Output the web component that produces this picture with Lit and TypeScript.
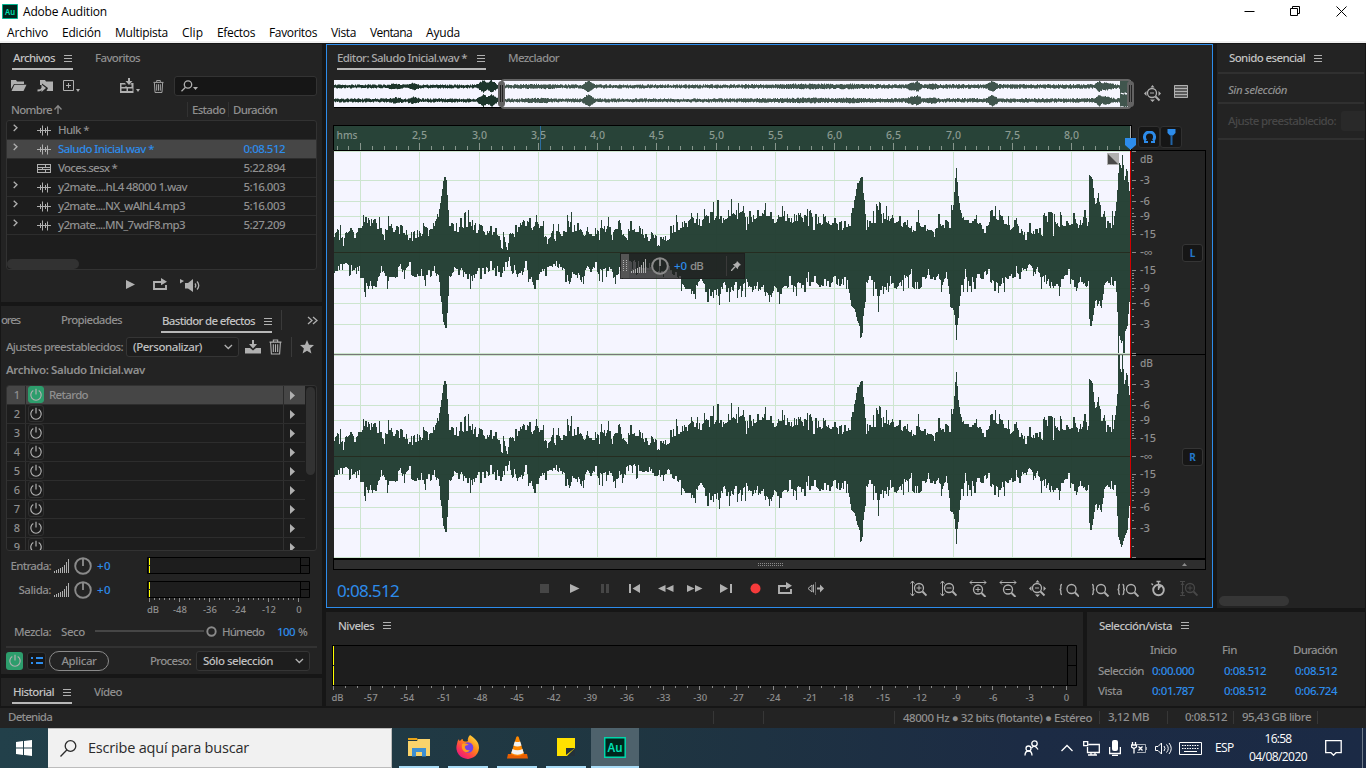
import { LitElement, html, svg, css } from "lit";
import { customElement, property } from "lit/decorators.js";

/** Text run that spreads its letters to occupy a given width. */
@customElement("fit-text")
class FitText extends LitElement {
  @property({ type: Number }) w = 0;
  static styles = css`
    :host { display: inline-block; white-space: nowrap; }
    .run { display: inline-block; white-space: nowrap; }
  `;
  render() { return html`<span class="run"><slot></slot></span>`; }
  firstUpdated() {
    if (!this.w) return;
    const run = this.renderRoot.querySelector(".run") as HTMLElement;
    const n = (this.textContent || "").trim().length;
    const natural = run.getBoundingClientRect().width;
    run.style.letterSpacing = `${(this.w - natural) / Math.max(1, n)}px`;
    this.style.width = `${this.w}px`;
  }
}

const T = (s: string, w: number, cls = "") => html`<fit-text class=${cls} .w=${w}>${s}</fit-text>`;
const icon = (x: number, y: number, w: number, h: number, body: unknown, cls = "") =>
  html`<svg class="ic ${cls}" width=${w} height=${h} viewBox="${x} ${y} ${w} ${h}">${body}</svg>`;

/* ---------- waveform data: [zoomed x, amplitude] pairs at a third of a pixel ---------- */
const UP_A = "24 15 35 23 52 6 75 24 95 20 105 24 113 37 125 29 147 33 165 24 175 12 183 22 187 36 192 26 200 24 230 26 245 17 260 11 275 22 292 29 308 16 325 26 334 38 338 35 344 49 349 62 354 75 361 75 364 59 368 40 372 26 385 21 400 25 405 34 412 24 425 25 428 42 432 30 440 32 453 19 463 27 480 17 495 26 510 24 520 16 527 4 535 15 545 2 553 19 570 27 583 29 600 26 612 34 620 22 628 30 632 37 637 28 650 26 665 8 680 21 700 20 710 16 720 20 724 37 730 25 736 40 741 20 758 29 775 16 785 25 808 24 820 12 826 32 845 26 860 12 883 29 905 12 915 31 925 23 940 26 955 14 980 19 1001 6 1015 12 1035 26 1047 20 1052 37 1057 22 1065 24 1075 31 1085 25 1097 39 1107 29 1115 39 1125 26 1138 36 1150 29 1158 40 1162 50 1166 32 1172 36 1176 52 1180 33 1190 29 1207 42 1212 36 1216 53 1222 39 1232 42 1252 46 1262 22 1272 41 1285 33 1295 42 1310 39 1318 49 1335 40 1345 36";
const UP_B = "0 31 12 29 25 37 37 46 48 31 65 34 80 37 92 39 105 37 115 26 125 39 132 22 138 38 150 29 160 38 175 31 195 34 205 22 225 31 240 26 247 44 255 52 258 60 262 69 267 69 272 75 278 75 280 60 283 52 290 22 300 31 315 29 322 46 326 42 330 54 337 29 345 33 349 46 353 32 358 31 368 37 375 29 390 36 400 29 412 32 425 26 435 21 441 30 445 42 452 26 465 27 480 22 493 15 502 24 507 38 515 26 528 32 540 24 545 47 551 47 554 62 557 76 559 86 562 72 567 49 570 42 575 39 585 32 600 29 620 37 630 29 645 19 655 27 672 36 688 42 700 32 715 36 722 22 740 34 750 19 768 12 780 29 790 21 810 24 817 16 828 36 843 40 850 16 862 29 874 37 885 26 900 27 912 39 925 24 945 42 952 26 956 30 958 77 963 76 967 74 972 60 975 48 981 49 985 61 988 50 992 47 1003 41 1010 24 1025 24 1035 36 1041 54 1045 75 1047 89 1051 88 1054 81 1057 99 1060 90 1064 69 1068 80 1071 86 1075 72 1078 61";
const DN_A = "24 21 40 18 60 11 70 24 100 14 108 26 115 40 130 34 150 35 160 24 167 14 180 24 185 37 190 25 205 25 220 14 235 27 252 10 270 25 292 24 298 34 303 23 325 14 340 30 345 44 349 60 352 70 357 74 361 79 364 64 367 44 370 24 385 15 412 25 430 22 433 37 437 24 450 22 465 27 495 9 510 24 525 25 540 10 550 5 557 19 575 25 590 23 600 9 607 30 620 30 627 37 633 28 645 20 660 24 675 14 692 9 705 15 720 30 730 32 740 20 767 30 785 14 800 17 810 10 830 30 855 17 865 25 880 15 890 27 905 10 920 17 938 9 960 15 985 20 1000 14 1012 25 1030 14 1050 20 1062 24 1070 32 1080 37 1104 42 1108 47 1112 33 1125 27 1140 40 1155 44 1172 43 1177 42 1180 55 1184 40 1195 30 1207 36 1210 50 1214 40 1230 30 1244 34 1247 45 1262 27 1280 40 1295 30 1315 40 1330 50 1336 45 1345 25";
const DN_B = "0 45 10 27 24 40 28 52 33 42 45 34 60 24 70 40 85 30 105 40 115 20 120 34 135 24 150 35 165 27 180 35 195 24 210 34 225 25 237 37 244 54 255 57 262 69 268 72 271 86 277 85 279 68 283 57 286 50 290 30 300 24 318 37 323 44 325 63 328 44 345 35 355 40 362 24 380 37 395 34 410 24 425 17 440 37 460 25 475 17 490 25 515 40 530 20 537 34 541 55 550 57 555 66 558 80 560 90 563 70 567 63 570 44 580 40 586 17 600 34 615 37 622 22 640 27 657 17 675 39 690 34 720 24 735 25 740 14 750 27 765 17 782 13 790 24 803 15 815 37 835 27 855 34 868 44 875 27 897 17 900 32 920 39 935 30 955 22 959 74 965 74 970 64 978 45 983 55 990 47 993 60 1000 42 1010 30 1025 25 1040 40 1045 80 1055 92 1065 80 1073 74 1078 50";

const nums = (s: string) => s.split(" ").map(Number);
function points(a: string, b: string): [number, number][] {
  const out: [number, number][] = [];
  const A = nums(a), B = nums(b);
  for (let i = 0; i < A.length; i += 2) out.push([326 + A[i] / 3, A[i + 1]]);
  for (let i = 0; i < B.length; i += 2) out.push([770 + B[i] / 3, B[i + 1]]);
  return out;
}
function rng(seed: number) {
  let s = seed;
  return () => { s = (s * 1664525 + 1013904223) % 4294967296; return s / 4294967296; };
}
/** Peaks and dips are one pixel wide; between them the level is a noisy local mean. */
function envelope(p: [number, number][], seed: number): number[] {
  const r = rng(seed);
  const out: number[] = [];
  let k = 0;
  let held = 0;
  for (let x = 334; x < 1131; x++) {
    const c = x + 0.5;
    while (k < p.length - 2 && p[k + 1][0] < c) k++;
    const [x0, y0] = p[k], [x1, y1] = p[k + 1];
    const f = Math.min(1, Math.max(0, (c - x0) / (x1 - x0)));
    let v = y0 + (y1 - y0) * f;
    const j = r();
    if (Math.max(y0, y1) < 54) {
      const near = c - x0 < 0.8 ? y0 : x1 - c < 0.8 ? y1 : -1;
      if (near >= 0) v = near;
      else {
        const around = p.slice(Math.max(0, k - 1), k + 3).map(q => Math.min(46, q[1]));
        const mean = around.reduce((a, b) => a + b, 0) / around.length;
        const base = mean * 0.7 + v * 0.3;
        if (r() > 0.35) held = (j - 0.58) * 11 + (j > 0.93 ? 6 : 0);
        v = base + held;
      }
    }
    out.push(Math.max(2, Math.min(101, Math.round(v))));
  }
  return out;
}
function wave(cy: number, seed: number, full: boolean): string {
  const u = envelope(points(UP_A, UP_B), seed);
  const d = envelope(points(DN_A, DN_B), seed + 9);
  for (let i = 784; i < 797; i++) {
    if (full) { if (i === 784 || i === 789 || i === 790) d[i] = 101; }
    else if (i === 784 || i === 785 || i === 788) u[i] = 101;
  }
  let s = `M334 ${cy}`;
  u.forEach((v, i) => (s += `V${cy - v}H${335 + i}`));
  for (let i = d.length - 1; i >= 0; i--) s += `V${cy + d[i]}H${334 + i}`;
  return s + "Z";
}
function miniWave(cy: number): string {
  const peaks: [number, number, number][] = [[395, 5, 1.3], [413, 4, 2], [483, 4, 4.5], [491, 4, 4.5], [588, 4, 4.5], [531, 8, 0.8], [545, 6, 0.8], [810, 30, 0.9], [850, 20, 0.8], [913, 6, 2.5], [917, 3, 3.5], [932, 5, 1.5], [992, 4, 4], [1099, 3, 4], [1105, 6, 2.500]];
  const r = rng(Math.round(cy * 7));
  const up: number[] = [], dn: number[] = [];
  for (let x = 334; x < 1131; x++) {
    let b = x > 740 ? 1.7 : 1.3;
    for (const [c, w, a] of peaks) b = Math.max(b, a * Math.max(0, 1 - Math.abs(x - c) / (w * 1.7)) + 1.5);
    if (x > 1119) b = 6.3;
    up.push(b + (r() - 0.4) * 1.3); dn.push(b + (r() - 0.5) * 1.3);
  }
  let s = `M334 ${cy}`;
  up.forEach((v, i) => (s += `V${(cy - v).toFixed(1)}H${335 + i}`));
  for (let i = dn.length - 1; i >= 0; i--) s += `V${(cy + dn[i]).toFixed(1)}H${334 + i}`;
  return s + "Z";
}

const rects = (list: number[][]) => list.map(([x, y, w, h]) => svg`<rect x=${x} y=${y} width=${w} height=${h}/>`);
const range = (n: number) => Array.from({ length: n }, (_, i) => i);

/* ---------- icons ---------- */
const burger = (cls = "") => icon(0, 0, 8, 7, rects([[0, 0, 8, 1], [0, 3, 8, 1], [0, 6, 8, 1]]), "light " + cls);
const trash = (w: number, h: number) => html`<svg class="ic light" width=${w} height=${h} viewBox="0 0 12 14"><path class="ln" d="M.5 2.500h11M4 2V.5h4V2M1.500 3l.7 10.500h7.600L10.500 3M4 4.500v7M6 4.500v7M8 4.500v7"/></svg>`;
const power = () => icon(0, 0, 14, 14, svg`<path class="lnp" d="M4.300 2.600a5.200 5.200 0 1 0 5.400 0M7 .8v5.700"/>`, "light");
const chevron = () => icon(0, 0, 9, 6, svg`<path class="ln15" d="M.7 1l3.600 3.500L8 1"/>`, "light");
const bars = () => icon(0, 0, 15, 14, rects([[0, 12, 1, 2], [2, 11, 1, 3], [4, 10, 1, 4], [6, 9, 1, 5], [8, 8, 1, 6], [10, 6, 1, 8], [12, 3, 1, 11], [14, 0, 1, 14]]), "light");
const knob = () => icon(0, 0, 18, 18, svg`<circle class="ln2" cx="9" cy="9" r="7.800"/><path class="ln2" d="M9 2v7"/>`, "mid");
const waveIcon = () => icon(0, 0, 14, 11, svg`<path class="ln" d="M0 5.500h14M3.500 3v5M5.500 .5v10M8.500 3v5M10.500 1.500v9"/>`, "light");
const sesxIcon = () => icon(0, 0, 14, 11, svg`<path d="M0 1h14v9H0z"/><path class="cut" d="M1 2h7v2H1zM9 2h4v2H9zM1 5h4v1H1zM6 5h7v1H6zM1 7h7v2H1zM9 7h4v2H9z"/>`, "light");
const lens = (x: number, y: number, inner = "") => svg`<circle class="ln15" cx=${x} cy=${y} r="4.500"/><path class="ln2" d="M${x + 3.5} ${y + 3.5}l4 4"/><path class="ln" d=${inner}/>`;
const loop = () => icon(0, 0, 15, 13, svg`<path class="ln2" d="M5 4H1v7h12V7"/><path d="M3 3h5V0l6 3.800-6 3.500V5H3z"/>`, "light");
const dropPin = svg`<path d="M6 0l4 4-1.500.5L7 6.500l-.2 1.700L1.800 3.200 3.500 3l2-1.500z"/><path class="ln15" d="M0 10l4-4.200"/>`;
const zoomFull = () => icon(0, 0, 17, 17, svg`${lens(8, 8, "M6 8h4")}<path d="M8.500 0l2 2.500h-4zM6 14.500h5L8.500 17zM0 8.500L2.500 6v5zM17 8.500L14.500 6v5z"/>`, "light");

@customElement("app-root")
class AppRoot extends LitElement {
  static styles = css`
    :host { display: block; width: 1366px; height: 768px; overflow: hidden; background: #161616; color: #8f8f8f; font: 500 11.5px/16px "Noto Sans", "Open Sans", sans-serif; }
    * { box-sizing: border-box; }
    svg { display: block; overflow: hidden; }
    .ic { flex: none; fill: currentColor; }
    .light { color: #b0b0b0; } .mid { color: #8a8a8a; }
    .ln, .ln15, .ln2, .lnp { fill: none; stroke: currentColor; stroke-width: 1; }
    .ln15 { stroke-width: 1.3; } .ln2 { stroke-width: 1.9; } .lnp { stroke-width: 1.200; }
    .cut { fill: #232323; }
    .blue { color: #2d8ceb; } .dim { color: #474747; }
    .grow { flex: 1; }

    .title { height: 23px; background: #fff; color: #000; display: grid; grid-template-columns: 17px 1fr 103px; padding: 0 19px 0 2px; align-items: center; font: 12px/22px "Open Sans", "Noto Sans", sans-serif; }
    .title .nm { margin-left: 4px; }
    .title .win { display: grid; grid-template-columns: 11px 11px 11px; column-gap: 35px; height: 20px; align-items: center; }
    .menu { height: 20px; background: #fff; border-bottom: 2px solid #f0f0f0; color: #000; display: flex; gap: 14px; padding-left: 7px; font: 12px/20px "Open Sans", "Noto Sans", sans-serif; }
    .app { height: 663px; display: flex; gap: 4px; padding: 1px 1px 0 1px; }
    .left { width: 321px; display: flex; flex-direction: column; gap: 4px; }
    .right { width: 1039px; display: flex; flex-direction: column; gap: 4px; }
    .panel { background: #232323; }
    .tabs { display: flex; height: 26px; padding-left: 11px; gap: 22px; line-height: 28px; }
    .tab { display: flex; gap: 9px; align-items: center; height: 26px; padding-top: 2px; }
    .tab.on { border-bottom: 2px solid #b8b8b8; padding: 4px 1px 0 1px; color: #c2c2c2; }

    .files { height: 258px; }
    .ftools { display: grid; grid-template-columns: 26px 26px 57px 33px 21px 143px; padding-left: 10px; height: 32px; align-items: center; }
    .search { height: 20px; border: 1px solid #333; border-radius: 3px; background: #161616; display: flex; align-items: center; padding-left: 6px; }
    .fhead { margin: 0 5px; height: 18px; display: grid; grid-template-columns: 181px 41px 1fr; line-height: 15px; }
    .fhead > div { display: flex; height: 15px; padding-left: 5px; }
    .fhead .b { border-left: 1px solid #323232; padding-left: 4px; }
    .list { margin: 0 5px; border: 1px solid #323232; border-radius: 3px; background: #1d1d1d; }
    .flist { height: 150px; display: flex; flex-direction: column; }
    .frow { height: 19px; display: grid; grid-template-columns: 30px 21px 170px 57px; align-items: center; border-bottom: 1px solid #2d2d2d; line-height: 18px; }
    .frow.sel { background: #464646; color: #2d8ceb; }
    .frow .arr { margin-left: 6px; margin-top: -4px; }
    .frow .dur { justify-self: end; }
    .hthumb { width: 72px; height: 10px; border-radius: 5px; background: #323232; margin-top: auto; }
    .ftrans { display: grid; grid-template-columns: 28px 27px 22px; padding-left: 124px; height: 29px; align-items: center; }

    .fx { height: 368px; overflow: hidden; }
    .fxtabs { display: grid; grid-template-columns: 60px 100px 111px 9px 1px 25px 11px; height: 26px; align-items: center; line-height: 28px; }
    .fxtabs .tab.on { grid-column: 3; }
    .vdiv { width: 1px; height: 20px; background: #3a3a3a; }
    .fxtabs .vdiv { grid-column: 5; } .fxtabs .more { grid-column: 7; }
    .preset { display: grid; grid-template-columns: 120px 113px 6px 24px 22px 9px 14px; height: 30px; align-items: center; padding-left: 5px; }
    .sel-box { display: flex; align-items: center; justify-content: space-between; height: 20px; border: 1px solid #353535; border-radius: 3px; padding: 0 5px 0 6px; background: #1d1d1d; color: #c0c0c0; line-height: 18px; }
    .fname { height: 23px; padding: 1px 0 0 5px; font-weight: 600; line-height: 14px; }
    .rack { height: 166px; display: flex; overflow: hidden; }
    .slots { width: 298px; }
    .slot { height: 19px; display: grid; grid-template-columns: 19px 22px 236px 21px; align-items: stretch; line-height: 18px; border-bottom: 1px solid #2d2d2d; }
    .slot .no { border-right: 1px solid #303030; text-align: right; padding-right: 5px; font-size: 11px; }
    .slot .pw { margin: 0 4px 1px 2px; border: 1px solid #303030; border-radius: 3px; display: grid; place-items: center; overflow: hidden; }
    .slot .nm { padding-left: 1px; border-right: 1px solid #303030; }
    .slot .go { display: grid; place-items: center start; padding-left: 6px; }
    .slot.on { background: #464646; } .slot.on .pw { background: #2d9d6c; border-color: #2d9d6c; } .slot.on .no, .slot.on .nm { border-color: #2a2a2a; }
    .vthumb { width: 10px; height: 88px; margin: 1px; border-radius: 5px; background: #323232; }
    .io { display: grid; grid-template-columns: 142px 164px; padding: 3px 0 0 4px; height: 64px; }
    .ctl { display: grid; grid-template-columns: 49px 20px 23px 20px; height: 24px; align-items: center; }
    .ctl fit-text:first-child { justify-self: end; margin-right: 3px; }
    .mix { height: 31px; display: grid; grid-template-columns: 47px 34px 127px 55px 21px 20px; padding: 3px 0 0 13px; align-items: center; }
    .hr { height: 2px; background: #323232; margin: 0 5px; }
    .foot { display: grid; grid-template-columns: 21px 22px 60px 41px 46px 114px; padding-left: 5px; height: 26px; align-items: center; }
    .btn { height: 18px; border-radius: 3px; display: grid; place-items: center; }
    .btn.green { width: 17px; background: #2d9d6c; } .btn.dark { width: 19px; background: #161616; border: 1px solid #303030; }
    .pill { height: 20px; border: 1.500px solid #8a8a8a; border-radius: 10px; display: grid; place-items: center; }
    .foot .pr { grid-column: 5; } .hist { height: 28px; }

    .top { display: flex; gap: 4px; height: 564px; }
    .editor { width: 887px; border: 1px solid #2d8ceb; height: 564px; }
    .editor .tabs { padding-left: 10px; height: 25px; }
    .editor .tab { height: 25px; padding-top: 1px; } .editor .tab.on { padding: 3px 1px 0 0; gap: 10px; color: #a8a8a8; }
    .ov { height: 55px; display: grid; grid-template-columns: 802px 15px 15px; padding: 9px 0 0 7px; }
    .ov .ic { margin-top: 6px; margin-left: 8px; } .ov .l { margin-left: 23px; }
    .ruler { display: flex; height: 25px; padding-left: 6px; }
    .ruler .grp { display: flex; margin: 1px 0 0 1px; }
    .rb { width: 22px; height: 22px; border: 1px solid #303030; border-radius: 3px; background: #161616; display: grid; place-items: center; }
    .stage { display: flex; padding-left: 7px; height: 408px; position: relative; }
    .hud { position: absolute; left: 293px; top: 103px; width: 125px; height: 26px; background: rgba(33, 33, 33, .8); display: grid; grid-template-columns: 10px 20px 23px 16px 36px 5px 12px; align-items: center; border: 1px solid rgba(25,25,25,.5); }
    .hud .grip { align-self: stretch; width: 8px; background: #555; display: grid; place-items: center; }
    .chan { position: absolute; left: 855px; width: 21px; height: 18px; border: 1px solid #353535; border-radius: 3px; background: #161616; color: #2477c9; font-weight: 700; font-size: 10px; line-height: 17px; text-align: center; }
    .chan.l { top: 94px; } .chan.r { top: 298px; }
    .hs { margin: 0 6px; height: 12px; border: 1px solid #000; border-top: 0; }
    .trans { display: grid; grid-template-columns: 203px 29px 32px 28px 29px 29px 33px 30px 28px 29px 103px 30px 29px 30px 30px 30px 33px 25px 34px 29px 18px; padding-left: 10px; height: 36px; align-items: center; }
    .time { font-size: 17px; line-height: 30px; padding-top: 5px; font-weight: 400; }

    .ess { width: 148px; overflow: hidden; }
    .ess .tabs { height: 28px; padding-left: 12px; } .ess .tab { color: #c2c2c2; }
    .ess .hr { margin: 0 1px; background: #303030; }
    .ess .t1 { height: 28px; padding: 8px 0 0 11px; font-style: italic; }
    .ess .t2 { height: 34px; display: flex; align-items: center; padding-left: 11px; gap: 5px; color: #474747; }
    .ess .t2 i { flex: 1; height: 20px; background: #292929; border-radius: 3px 0 0 3px; }
    .ess .blank { height: 469px; border-top: 2px solid #303030; margin: 0 1px; display: flex; align-items: flex-end; }
    .ess .blank i { width: 70px; height: 10px; border-radius: 5px; background: #363636; margin: 0 0 1px 1px; }
    .ess .blank .b2 { height: 100%; }
    .bottom { display: flex; gap: 4px; height: 94px; }
    .lev { width: 757px; } .selv { width: 278px; }
    .bottom .tabs { padding-left: 12px; } .bottom .tab { padding-top: 1px; color: #c2c2c2; }
    .selg { display: grid; grid-template-columns: 52px 72px 71px 50px; grid-template-rows: 24px 17px 24px; padding-left: 11px; align-items: center; }
    .selg .blue { margin-left: 2px; }
    .status { height: 22px; border-top: 2px solid #161616; background: #232323; display: grid; grid-template-columns: 705px 50px 131px 9px 196px 9px 59px 18px 48px 9px 75px 1px; padding-left: 8px; line-height: 17px; align-items: start; }
    .status .vdiv { height: 13px; margin-top: 3px; background: #373737; } .status .lo { padding-top: 1px; }

    .task { height: 40px; display: flex; background: linear-gradient(90deg, #22404a, #1f3641 45%, #1c2b44 75%, #1b2a45); color: #fff; font: 12px/18px "Open Sans", "Noto Sans", sans-serif; }
    .start { width: 48px; display: grid; place-items: center; }
    .tsearch { width: 344px; background: #f1f1f1; border: 1px solid #bcbcbc; border-left: 0; color: #2b2b2b; display: flex; align-items: center; gap: 11px; padding-left: 12px; font-size: 14.500px; }
    .tapps { display: flex; padding-left: 7px; gap: 9px; }
    .tapp { width: 40px; display: grid; place-items: center; border-bottom: 2px solid #a9dcf7; }
    .tapp.act { width: 48px; background: #4e626c; margin-left: -4px; }
    .tray { display: grid; grid-template-columns: 37px 22px 26px 22px 24px 24px 36px 34px 58px 18px 16px 21px 4px; margin-left: 385px; align-items: center; }
    .clock { display: grid; justify-items: center; }
    .tray .end { width: 1px; height: 40px; background: #6f7b8a; }
    .tx { fill: #8f8f8f; font: 500 11px "Noto Sans", sans-serif; } .rl { fill: #8b9a91; }
    .sm { font-size: 9.500px; }
  `;

  files = [
    ["w", "Hulk *", 31, "", true], ["w", "Saludo Inicial.wav *", 96, "0:08.512", true], ["s", "Voces.sesx *", 59, "5:22.894", false],
    ["w", "y2mate....hL4 48000 1.wav", 129, "5:16.003", true], ["w", "y2mate....NX_wAlhL4.mp3", 127, "5:16.003", true], ["w", "y2mate....MN_7wdF8.mp3", 127, "5:27.209", true],
  ] as [string, string, number, string, boolean][];

  filesPanel() {
    return html`<section class="panel files">
      <div class="tabs"><div class="tab on">${T("Archivos", 42)}${burger()}</div><div class="tab">${T("Favoritos", 45)}</div></div>
      <div class="ftools">
        ${icon(11, 79, 16, 14, svg`<path d="M11 80h5l1 1.500h7V84H14l-3 5z"/><path d="M14.500 84.800H26.500L23.500 91H11.500z"/>`, "light")}
        ${icon(37, 79, 17, 14, svg`<path d="M40 80h5l1 1.500h7V91h-6.500l1.500-3-6-4.500v1.500h-2z"/><path class="ln2" d="M37.500 90.500q4 0 5-2.500"/><path d="M41.500 84.500l4.500 3.500-4.500 4z"/>`, "light")}
        ${icon(63, 79, 18, 14, svg`<path class="ln" d="M63.500 80.500h10v10h-10zM66 85.500h5M68.500 83v5"/><path d="M76 89h4l-2 3z"/>`, "light")}
        ${icon(120, 78, 20, 16, svg`<path d="M128 78h2v3h2.500L129 85l-3.500-4h2.500z"/><path d="M120 83h5l1 1.500h-4.500V87h4V86h1v1h5v-2.500h-1.500l1.500-1.500h2v10h-14zM121.500 88.500v2.500h5v-2.500zM128 88.500v2.500h4.500v-2.500z"/><path d="M136 89h4l-2 3z"/>`, "light")}
        ${trash(11, 13)}
        <div class="search">${icon(181, 80, 18, 12, svg`<circle class="ln15" cx="188" cy="84.500" r="3.700"/><path class="ln15" d="M185.500 87.200l-4 4"/><path d="M193 87h5l-2.500 3z"/>`, "light")}</div>
      </div>
      <div class="fhead"><div>${T("Nombre", 41)}${icon(0, 0, 11, 13, svg`<path class="ln15" d="M6 12V4M2.500 7.500L6 3.800l3.500 3.700"/>`, "mid")}</div><div class="b">${T("Estado", 33)}</div><div class="b">${T("Duración", 44)}</div></div>
      <div class="list flist">
        ${this.files.map((f, i) => html`<div class="frow ${i === 1 ? "sel" : ""}">
          ${f[4] ? icon(0, 0, 5, 8, svg`<path class="ln15" d="M.7 .7L4 3.700.7 7"/>`, "light arr") : html`<span></span>`}
          ${f[0] === "w" ? waveIcon() : sesxIcon()}${T(f[1], f[2])}<span class="dur">${f[3] ? T(f[3], 41.5) : ""}</span></div>`)}
        <div class="hthumb"></div>
      </div>
      <div class="ftrans">${icon(0, 0, 11, 11, svg`<path d="M1 1l9 4.500L1 10z"/>`, "light")}${loop()}
        ${icon(0, 0, 21, 14, svg`<path d="M0 1l4 2-4 2.500zM5 5h3l5-4v13L8 10.500H5z"/><path class="ln15" d="M15 5.500q1.500 2 0 4M17 3.500q3.500 4 0 8"/>`, "light")}</div>
    </section>`;
  }

  fxPanel() {
    return html`<section class="panel fx">
      <div class="fxtabs"><div>${T("ores", 19)}</div><div>${T("Propiedades", 61)}</div>
        <div class="tab on">${T("Bastidor de efectos", 93)}${burger()}</div><span class="vdiv"></span>
        ${icon(0, 0, 11, 9, svg`<path class="ln15" d="M1 1l4 3.500L1 8M6 1l4 3.500L6 8"/>`, "light more")}</div>
      <div class="preset">${T("Ajustes preestablecidos:", 117)}<div class="sel-box">${T("(Personalizar)", 69)}${chevron()}</div><span></span>
        ${icon(0, 0, 16, 14, svg`<path d="M0 8h5l3 2.500L11 8h5v5.500H0zM7 0h2v4h3L8 8.500 4 4h3z"/>`, "light")}${trash(13, 16)}<span class="vdiv"></span>
        ${icon(0, 0, 14, 14, svg`<path d="M7 0l2 4.700 5 .4-3.900 3.300L11.400 13.500 7 10.800 2.600 13.500 3.900 8.400 0 5.100l5-.4z"/>`, "light")}</div>
      <div class="fname">${T("Archivo: Saludo Inicial.wav", 139)}</div>
      <div class="list rack"><div class="slots">${range(9).map(i => html`<div class="slot ${i ? "" : "on"}"><span class="no">${i + 1}</span><span class="pw">${power()}</span><span class="nm">${i ? "" : T("Retardo", 39)}</span><span class="go">${icon(0, 0, 5, 9, svg`<path d="M0 0l5 4.500L0 9z"/>`, "light")}</span></div>`)}</div><div class="vthumb"></div></div>
      <div class="io"><div>
        <div class="ctl">${T("Entrada:", 40.5)}${bars()}${knob()}${T("+0", 14, "blue")}</div>
        <div class="ctl">${T("Salida:", 32.5)}${bars()}${knob()}${T("+0", 14, "blue")}</div></div>
        <svg width="164" height="61" viewBox="147 556 164 61">
          <g fill="#1d1d1d" stroke="#000"><path d="M147.500 559.500h162v16h-162zM300.500 559.500v16M300.500 567.500h9"/><path d="M147.500 583.500h162v16h-162zM300.500 583.500v16M300.500 591.500h9"/></g>
          <path stroke="#ff0" d="M149.500 560v7M149.500 568v7M149.500 584v7M149.500 592v7"/>
          <g fill="#8a8a8a">${range(31).map(i => svg`<rect x=${149 + Math.round(i * 4.97)} y="600" width="1" height=${i % 6 ? 2 : 4}/>`)}</g>
          ${[["dB", 153], ["-48", 180], ["-36", 210], ["-24", 239], ["-12", 269], ["0", 299]].map(([s, x]) => svg`<text class="tx sm" text-anchor="middle" x=${x} y="615">${s}</text>`)}
        </svg></div>
      <div class="mix">${T("Mezcla:", 37)}${T("Seco", 24)}${icon(95, 625, 122, 12, svg`<path stroke="#464646" stroke-width="2" d="M95 630h109"/><circle class="ln2" cx="211.500" cy="630.500" r="4.200"/>`, "mid")}${T("Húmedo", 42)}${T("100", 18, "blue")}${T("%", 10)}</div>
      <div class="hr"></div>
      <div class="foot"><div class="btn green">${power()}</div><div class="btn dark">${icon(0, 0, 12, 8, rects([[0, 0, 2, 2], [0, 5, 2, 2], [5, 0, 7, 2], [5, 5, 7, 2]]), "blue")}</div><div class="pill">${T("Aplicar", 35)}</div><span></span><span class="pr">${T("Proceso:", 41)}</span><div class="sel-box">${T("Sólo selección", 70)}${chevron()}</div></div>
    </section>`;
  }

  editor() {
    const xs = range(13).map(i => 360 + Math.round(i * 59.25));
    const grid = [151, 180, 201, 216, 234, 270, 288, 303, 324, 353, 355, 384, 405, 420, 438, 474, 492, 507, 528, 557];
    const marks: [string, number][] = [["dB", 163], ["-3", 184], ["-6", 205], ["-9", 220], ["-15", 238], ["-∞", 256], ["-15", 274], ["-9", 292], ["-6", 307], ["-3", 328], ["dB", 367], ["-3", 388], ["-6", 409], ["-9", 424], ["-15", 442], ["-∞", 460], ["-15", 478], ["-9", 496], ["-6", 511], ["-3", 532]];
    const minor = [162, 170, 188, 195, 208, 213, 220, 223, 226, 229, 231].flatMap(y => [y, 504 - y, y + 204, 708 - y]);
    return html`<section class="panel editor">
      <div class="tabs"><div class="tab on">${T("Editor: Saludo Inicial.wav *", 130)}${burger()}</div><div class="tab">${T("Mezclador", 51)}</div></div>
      <div class="ov">
        <svg width="802" height="32" viewBox="334 79 802 32">
          <rect x="334" y="80" width="797" height="27" fill="#f5f5ff"/><rect x="334" y="107" width="797" height="1" fill="#000"/>
          <path d=${miniWave(86.5)} fill="#1c352b"/><path d=${miniWave(100.5)} fill="#1c352b"/>
          <rect x="502" y="81" width="628" height="26" fill="#fff" opacity=".16"/>
          <rect x="501.500" y="80" width="629" height="28" rx="3" fill="none" stroke="#666" stroke-width="2"/>
          ${[501.5, 1130.5].map(x => svg`<rect x=${x - 3.5} y="81" width="7" height="26" rx="3.500" fill="#626262"/><path d="M${x - 1} 85v17M${x + 1} 85v17" stroke="#222"/>`)}
        </svg>
        ${zoomFull()}
        ${icon(0, 0, 14, 13, svg`<path fill="#5a5a5a" d="M0 0h14v13H0z"/><path class="ln" d="M.5 .5h13v12H.5zM0 3.500h14M0 6.500h14M0 9.500h14"/>`, "light l")}
      </div>
      <div class="ruler">
        <svg width="804" height="25" viewBox="333 125 804 25"><rect x="333" y="125" width="799" height="25" fill="#000"/><rect x="334" y="126" width="797" height="24" fill="#284338"/>
          <g fill="#87968d">${range(68).map(i => svg`<rect x=${336 + Math.round(i * 11.85 + 0.5)} y="146" width="1" height="4"/>`)}${xs.map(x => svg`<rect x=${x} y="143" width="1" height="7"/>`)}</g>
          <text class="tx rl" x="336.500" y="139" textLength="21" lengthAdjust="spacingAndGlyphs">hms</text>
          ${["2,5", "3,0", "3,5", "4,0", "4,5", "5,0", "5,5", "6,0", "6,5", "7,0", "7,5", "8,0"].map((s, i) => svg`<text class="tx rl" text-anchor="middle" x=${xs[i + 1] + 0.5} y="139" textLength="15" lengthAdjust="spacingAndGlyphs">${s}</text>`)}
          <rect x="540" y="126" width="1" height="24" fill="#2d6ea0"/><rect x="1130" y="126" width="1" height="12" fill="#aaa"/>
          <path fill="#2d8ceb" d="M1125 138h11v7l-4.500 4h-2l-4.500-4z"/></svg>
        <div class="grp"><div class="rb">${icon(0, 0, 13, 13, svg`<path fill="none" stroke="currentColor" stroke-width="3" d="M3 9.500q-1.800-1.500-1.500-4a5 4.500 0 0 1 10 0q.3 2.500-1.500 4"/><path d="M1 10h4v2H1zM8 10h4v2H8z"/>`, "blue")}</div><div class="rb">${icon(0, 0, 9, 16, svg`<path d="M.5 0h8v4L6 6.500H3L.5 4z"/><path stroke="#2163a5" stroke-width="2" d="M4.500 6v10"/>`, "blue")}</div></div>
      </div>
      <div class="stage">
        <svg width="797" height="408" viewBox="334 150 797 408"><rect x="334" y="150" width="797" height="408" fill="#f5f5ff"/><rect x="334" y="150" width="797" height="1" fill="#000"/>
          <g fill="#cde5cf">${xs.map(x => svg`<rect x=${x} y="151" width="1" height="407"/>`)}${grid.map(y => svg`<rect x="334" y=${y} width="797" height="1"/>`)}</g>
          <g opacity=".965"><path fill="#213d31" d=${wave(252, 7, true)}/><path fill="#213d31" d=${wave(456, 7, false)}/></g>
          <path fill="#252c20" d="M334 252h797v1H334zM334 456h797v1H334z"/><rect x="334" y="354" width="797" height="1" fill="#777"/>
          <rect x="1107" y="153" width="12" height="12" fill="#b0b0b0"/><path d="M1108 154l10 10h-10z" fill="#4a4a4a"/>
          <rect x="1130" y="151" width="1" height="407" fill="#d00000"/>
        </svg>
        <svg width="75" height="408" viewBox="1131 150 75 408"><rect x="1131" y="150" width="75" height="1" fill="#000"/><rect x="1205" y="150" width="1" height="408" fill="#000"/><rect x="1131" y="354" width="74" height="1" fill="#000"/>
          <g fill="#8a8a8a">${[...grid, 252, 456].map(y => svg`<rect x="1132" y=${y} width="4" height="1"/>`)}${minor.map(y => svg`<rect x="1132" y=${y} width="2" height="1"/>`)}</g>
          ${marks.map(([s, y]) => svg`<text class="tx" x="1140" y=${y} textLength=${s.length > 2 ? 16 : s === "dB" ? 13 : s === "-∞" ? 13 : 10} lengthAdjust="spacingAndGlyphs">${s}</text>`)}
        </svg>
        <div class="hud"><span class="grip">${icon(0, 0, 4, 12, range(6).map(i => svg`<path d="M0 ${i * 2}h1v1H0zM3 ${i * 2}h1v1H3z"/>`), "light")}</span>${bars()}${knob()}${T("+0", 13, "blue")}${T("dB", 13)}<span class="vdiv"></span>${icon(0, 0, 10, 10, dropPin, "light")}</div>
        <div class="chan l">L</div><div class="chan r">R</div>
      </div>
      <div class="hs"><svg width="871" height="11" viewBox="334 559 871 11"><rect x="334" y="559" width="871" height="2" fill="#000"/><rect x="334" y="561" width="871" height="9" fill="#2e2e2e"/><g fill="#8a8a8a">${range(13).map(i => svg`<path d="M${758 + i * 2} 564h1v1h-1zM${758 + i * 2} 566h1v1h-1z"/>`)}<path d="M1182 567h5l-2.500-3z"/></g></svg></div>
      <div class="trans"><div class="time blue">${T("0:08.512", 62)}</div>
        ${icon(0, 0, 9, 9, svg`<path fill="#464646" d="M0 0h9v9H0z"/>`)}${icon(0, 0, 11, 11, svg`<path d="M1 1l9.500 4.500L1 10z"/>`, "light")}${icon(0, 0, 8, 9, svg`<path fill="#464646" d="M0 0h3v9H0zM5 0h3v9H5z"/>`)}
        ${icon(0, 0, 12, 9, svg`<path d="M0 0h2v9H0zM11 0v9L3.500 4.500z"/>`, "light")}${icon(0, 0, 16, 9, svg`<path d="M7.500 1v7L0 4.500zM15.500 1v7L8 4.500z"/>`, "light")}${icon(0, 0, 16, 9, svg`<path d="M0 1v7l7.500-3.500zM8 1v7l7.500-3.500z"/>`, "light")}
        <svg class="ic light rt" width="12" height="9" viewBox="-1 0 12 9"><path d="M9 0h2v9H9zM-1 0v9l8-4.500z"/></svg>${icon(0, 0, 11, 11, svg`<circle cx="5.500" cy="5.500" r="5" fill="#f53b3b"/>`)}${loop()}
        ${icon(0, 0, 17, 13, svg`<path class="ln" d="M8.500 0v13" opacity=".5"/><path class="ln" d="M5 3L1 6.500 5 10M5 3v7"/><path d="M7 2.500v8h-1v-8zM10 5.500h3v-3l4 4-4 4v-3h-3z"/>`, "light")}
        ${icon(0, 0, 17, 17, svg`<path class="ln" d="M2.500 1v15M.5 3.500l2-2.500 2 2.500M.5 13.500l2 2.500 2-2.500"/>${lens(9, 8, "M6.500 8h5M9 5.500v5")}`, "light")}
        ${icon(0, 0, 17, 17, svg`<path class="ln" d="M2.500 1v15M.5 3.500l2-2.500 2 2.500M.5 13.500l2 2.500 2-2.500"/>${lens(9, 8, "M6.500 8h5")}`, "light")}
        ${icon(0, 0, 18, 17, svg`<path class="ln" d="M1 2.500h16M3 .5l-2 2 2 2M15 .5l2 2-2 2"/>${lens(9, 9.5, "M6.500 9.500h5M9 7v5")}`, "light")}
        ${icon(0, 0, 18, 17, svg`<path class="ln" d="M1 2.500h16M3 .5l-2 2 2 2M15 .5l2 2-2 2"/>${lens(9, 9.5, "M6.500 9.500h5")}`, "light")}
        ${zoomFull()}
        ${icon(0, 0, 20, 17, svg`<path class="ln15" d="M3 4.500Q1.500 4.500 1.800 7T.5 9.500Q2 9.500 1.800 12T3 14.500"/>${lens(12.5, 9, "")}`, "light")}
        ${icon(0, 0, 20, 17, svg`<path class="ln15" d="M0 4.500q1.500 0 1.200 2.500T2.500 9.500Q1 9.500 1.200 12T0 14.500"/>${lens(9, 9, "")}`, "light")}
        ${icon(0, 0, 22, 17, svg`<path class="ln15" d="M3 4.500Q1.500 4.500 1.800 7T.5 9.500Q2 9.500 1.800 12T3 14.500M5.500 4.500q1.500 0 1.200 2.500T8 9.500Q6.500 9.500 6.700 12T5.500 14.500"/>${lens(14, 9, "")}`, "light")}
        ${icon(0, 0, 14, 17, svg`<circle class="ln2" cx="7.500" cy="10" r="5.300"/><path class="ln15" d="M7.500 5V1M5.500 1.500h4M7.500 10V6M2 5L.5 3.500"/><path d="M7 10l5-5-5 1z"/>`, "light")}
        ${icon(0, 0, 18, 17, svg`<path class="ln" d="M2.500 2v13M0 1.500h5M0 15.500h5M1 5l1.500-2L4 5M1 12l1.500 2L4 12"/>${lens(10, 8, "M7.500 8h5M10 5.500v5")}`, "dim")}
      </div>
    </section>`;
  }

  essential() {
    return html`<section class="panel ess"><div class="tabs"><div class="tab">${T("Sonido esencial", 76)}${burger()}</div></div><div class="hr"></div>
      <div class="t1">${T("Sin selección", 59)}</div><div class="hr"></div><div class="t2">${T("Ajuste preestablecido:", 108)}<i></i></div>
      <div class="blank"><i></i></div></section>`;
  }

  bottom() {
    return html`<div class="bottom"><section class="panel lev"><div class="tabs"><div class="tab">${T("Niveles", 36)}${burger()}</div></div>
      <svg width="757" height="68" viewBox="326 638 757 68"><rect x="332.500" y="645.500" width="744" height="40" fill="#1d1d1d" stroke="#000"/><path stroke="#000" d="M1067.500 645v40M1067 665.500h9"/><path stroke="#ff0" d="M333.500 646v19M333.500 666v19"/>
      <g fill="#8a8a8a">${range(61).map(i => svg`<rect x=${333 + Math.round(i * 12.21)} y="686" width="1" height=${i % 3 ? 2 : 4}/>`)}</g>
      ${range(21).map(i => svg`<text class="tx sm" text-anchor="middle" x=${i ? 334 + i * 36.62 : 337.5} y="701">${i ? (i === 20 ? "0" : "-" + (60 - i * 3)) : "dB"}</text>`)}</svg></section>
      <section class="panel selv"><div class="tabs"><div class="tab">${T("Selección/vista", 73)}${burger()}</div></div>
        <div class="selg"><span></span>${T("Inicio", 26.5)}${T("Fin", 15)}${T("Duración", 44)}
        ${T("Selección", 46)}${T("0:00.000", 42, "blue")}${T("0:08.512", 42, "blue")}${T("0:08.512", 42, "blue")}
        ${T("Vista", 24)}${T("0:01.787", 42, "blue")}${T("0:08.512", 42, "blue")}${T("0:06.724", 42, "blue")}</div></section></div>`;
  }

  taskbar() {
    return html`<div class="task"><div class="start">${icon(0, 0, 16, 16, svg`<path d="M0 2l7-1v6.500H0zM8 1l8-1v7.500H8zM0 8.500h7V15l-7-1zM8 8.500h8V16l-8-1z"/>`)}</div>
      <div class="tsearch">${icon(0, 0, 17, 17, svg`<circle class="ln15" cx="10.500" cy="6" r="5.300"/><path class="ln15" d="M6.800 10L.5 16.500"/>`)}${T("Escribe aquí para buscar", 161)}</div>
      <div class="tapps">
        <div class="tapp">${icon(0, 0, 22, 19, svg`<path fill="#e8a317" d="M0 0h9l1 2H0z"/><path fill="#f9d36b" d="M0 3h9l1-2h12v17H0z"/><path fill="#3d8fd1" d="M4 10h14v8.500h-4V14H8v4.500H4z"/>`)}</div>
        <div class="tapp">${icon(0, 0, 24, 24, svg`<defs><linearGradient id="ff" x1="1" y1="0" x2=".2" y2="1"><stop offset="0" stop-color="#fff44f"/><stop offset=".45" stop-color="#ff8a16"/><stop offset=".75" stop-color="#ff3a4e"/><stop offset="1" stop-color="#e31587"/></linearGradient></defs><path fill="url(#ff)" d="M14 0q6 4 8 8a11.300 11.300 0 1 1-21 1q0-3 2-5 0 2 1 2 1-2 3-2-.5 1 .5 2Q10 7 12 6q-1-3 2-6z"/><circle cx="12" cy="12.500" r="5.300" fill="#7542e5"/><path fill="#ff9a1f" d="M6 9q3-2 7 1-5 0-4 3 1 3 5 2-2 3-5 2-4-2-3-8z"/>`)}</div>
        <div class="tapp">${icon(0, 0, 21, 23, svg`<path fill="#e85e00" d="M1 18h19l1 4.500H0z"/><path fill="#ff8800" d="M9.300 1q1.200-1.500 2.400 0L17 18q-6.500 4-13 0z"/><path fill="#f2f2f2" d="M7.800 5.500L6.500 9.500q4 2 8 0l-1.300-4q-2.700 1-5.400 0zM5.500 13l-1.200 4q6.200 3.500 12.400 0l-1.200-4q-5 2.500-10 0z"/>`)}</div>
        <div class="tapp">${icon(0, 0, 18, 18, svg`<path fill="#ffe100" d="M0 0h18v18H0z"/><path fill="#24313a" d="M9 17v-7h9z"/><path fill="#24313a" d="M10 18l8-8v8z"/>`)}</div>
        <div class="tapp act">${icon(0, 0, 22, 21, svg`<path fill="#00251c" stroke="#00d7ab" stroke-width="1.500" d="M.7.7h20.500v19.500H.7z"/><text x="3.500" y="15" textLength="15" lengthAdjust="spacingAndGlyphs" fill="#00e0b4" font-family="Noto Sans" font-weight="600" font-size="13">Au</text>`)}</div>
      </div>
      <div class="tray">
        ${icon(0, 0, 15, 16, svg`<circle class="ln15" cx="10.500" cy="3.500" r="2.700"/><circle class="ln15" cx="4.500" cy="8.500" r="2.500"/><path class="ln15" d="M1 15.500q0-4.500 3.500-4.500T8 15.500M7.500 8q3-4 6.500 1.500"/>`)}
        ${icon(0, 0, 12, 8, svg`<path class="ln15" d="M.5 7L6 1.500 11.500 7"/>`)}
        ${icon(0, 0, 17, 15, svg`<path class="ln15" d="M5.500 3.500h10.800v8H4.500V6M8 12v2.500M12 12v2.500M5 14h9M.7.7h4v4h-4z"/>`)}
        ${icon(0, 0, 12, 16, svg`<rect x="3" y="0" width="6" height="11" rx="2"/><path class="ln15" d="M.6 7v6.500h10.800V7M3 15.500h6"/>`)}
        ${icon(0, 0, 17, 13, svg`<path class="ln" d="M6 2.500h8.500v8H6M15.500 5v3" opacity=".6"/><path class="ln15" d="M1.500 0v2.500M4.500 0v2.500M.5 3h5v2L3 6.500.5 5zM3 6.500v5M7.500 4.500l4 4M11.500 4.500l-4 4"/>`)}
        ${icon(0, 0, 17, 13, svg`<path class="ln" d="M.5 4.500H3L6.500 1v11L3 8.500H.5zM9 4q2 2.500 0 5M11.500 2.500q3.500 4 0 8M14 1q4.500 5.500 0 11"/>`)}
        ${icon(0, 0, 23, 13, svg`<path class="ln" d="M.5.5h22v12H.5z"/><path stroke="#fff" stroke-dasharray="1.500 1" d="M3 3.500h17M3 6.500h17"/><path stroke="#fff" d="M5 9.500h13"/>`)}
        ${T("ESP", 18.5)}<div class="clock">${T("16:58", 27)}${T("04/08/2020", 58)}</div><span></span>
        ${icon(0, 0, 17, 16, svg`<path class="ln15" d="M.7.7h15.500v12H11l-2.500 2.500L6 12.700H.7z"/>`)}<span></span><span class="end"></span>
      </div></div>`;
  }

  render() {
    return html`
      <div class="title">${icon(0, 0, 16, 15, svg`<path fill="#00251c" stroke="#00b591" stroke-width="1" d="M.5.5h15v14H.5z"/><text x="3" y="11" textLength="10" lengthAdjust="spacingAndGlyphs" fill="#00e0b4" font-family="Noto Sans" font-weight="600" font-size="9.500">Au</text>`)}<span class="nm">${T("Adobe Audition", 84)}</span>
        <div class="win">${icon(0, 0, 11, 11, svg`<path class="ln" d="M0.500 5.500h10"/>`)}${icon(0, 0, 11, 11, svg`<path class="ln" d="M.5 2.500h7v7h-7zM2.500 2V.5h7v7H8"/>`)}${icon(0, 0, 11, 11, svg`<path class="ln" d="M.5.5l10 10M10.500.5l-10 10"/>`)}</div></div>
      <div class="menu">${([["Archivo", 41], ["Edición", 39], ["Multipista", 53], ["Clip", 21], ["Efectos", 38], ["Favoritos", 48], ["Vista", 25], ["Ventana", 42], ["Ayuda", 34]] as [string, number][]).map(([s, w]) => T(s, w))}</div>
      <div class="app"><div class="left">${this.filesPanel()}${this.fxPanel()}<section class="panel hist"><div class="tabs"><div class="tab on">${T("Historial", 41)}${burger()}</div><div class="tab">${T("Vídeo", 28)}</div></div></section></div>
        <div class="right"><div class="top">${this.editor()}${this.essential()}</div>${this.bottom()}</div></div>
      <div class="status">${T("Detenida", 44)}<span class="vdiv"></span><span class="vdiv"></span><span class="vdiv"></span><span class="lo">${T("48000 Hz ● 32 bits (flotante) ● Estéreo", 189)}</span><span class="vdiv"></span>${T("3,12 MB", 41)}<span class="vdiv"></span>${T("0:08.512", 42)}<span class="vdiv"></span>${T("95,43 GB libre", 69)}<span class="vdiv"></span></div>
      ${this.taskbar()}`;
  }
}
